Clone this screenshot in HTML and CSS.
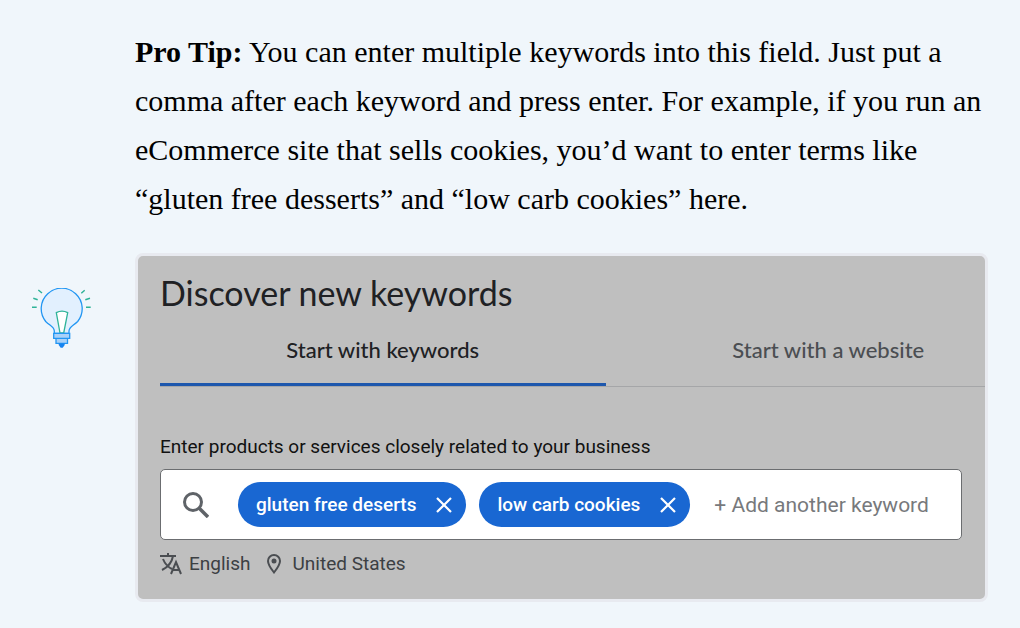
FILE: index.html
```html
<!DOCTYPE html>
<html lang="en">
<head>
	<meta charset="UTF-8">
	<meta name="viewport" content="width=device-width, initial-scale=1">
	<title>Pro Tip</title>
	<link rel="stylesheet" href="styles.css">
</head>
<body>
	<div class="tip">
		<svg class="bulb" viewBox="0 0 60 60" fill="none" stroke-width="1.300" aria-hidden="true">
			<path d="M22.300 45.300V43c0-4-4-5-8.600-9.500a20.500 20.500 0 1 1 32 0C41 38 37 39 37 43v2.300z" fill="#e2f0fe" stroke="#2196f3"/>
			<path d="M28 45 24.300 24.700q5.700-3 11.400 0L31.700 45z" fill="#fff" stroke="#2eb398"/>
			<path d="M21.700 45.300h16v5h-16zM24 50.300h11.500v5H24z" fill="#a9d1f8" stroke="#2196f3"/>
			<path d="M26.700 55.500h6v1.500l-2 2.700h-2l-2-2.700z" fill="#1683f0"/>
			<path d="m6.300 2 3.700 3M1.300 10.300l4.400 1.400M0 19.300h4.700M52.700 2.300l-3.400 3M58 10.300l-4.700 1.400M58.700 19.300H54" stroke="#2eb398" stroke-width="1.500"/>
		</svg>
		<div class="tip-body">
			<p><strong>Pro Tip:</strong> You can enter multiple keywords into this field. Just put a comma after each keyword and press enter. For example, if you run an eCommerce site that sells cookies, you’d want to enter terms like “gluten free desserts” and “low carb cookies” here.</p>
			<div class="planner">
				<h2>Discover new keywords</h2>
				<div class="tabs">
					<button class="tab active" type="button">Start with keywords</button>
					<button class="tab" type="button">Start with a website</button>
				</div>
				<form class="search">
					<label for="keyword">Enter products or services closely related to your business</label>
					<div class="field">
						<svg class="glass" viewBox="0 0 26 26" fill="none" aria-hidden="true">
							<circle cx="10" cy="10" r="8.500" stroke="#5f6368" stroke-width="3"/>
							<path d="m16 16 9 9" stroke="#5f6368" stroke-width="3.500"/>
						</svg>
						<span class="chip">gluten free deserts
							<button type="button" aria-label="Remove gluten free deserts"><svg viewBox="0 0 16 16"><path d="m1 1 14 14M15 1 1 15"/></svg></button>
						</span>
						<span class="chip">low carb cookies
							<button type="button" aria-label="Remove low carb cookies"><svg viewBox="0 0 16 16"><path d="m1 1 14 14M15 1 1 15"/></svg></button>
						</span>
						<input id="keyword" type="text" placeholder="+ Add another keyword">
					</div>
				</form>
				<div class="meta">
					<svg class="lang" viewBox="0 0 22 22" fill="none" stroke="#4b4e52" stroke-width="2" aria-hidden="true">
						<path d="M0 3h16M8 0v3M3 6c2 5 5 8 9 10M13 3C12 9 8 14 2 17"/>
						<path d="m11 21 5-12 5 12M13 17h6"/>
					</svg>
					<span>English</span>
					<svg class="pin" viewBox="0 0 16 20" fill="none" aria-hidden="true">
						<path d="M8 18.500C4 13.500 2 10.500 2 7a6 6 0 0 1 12 0c0 3.500-2 6.500-6 11.500z" stroke="#4b4e52" stroke-width="2"/>
						<circle cx="8" cy="7" r="2.500" fill="#4b4e52"/>
					</svg>
					<span>United States</span>
				</div>
			</div>
		</div>
	</div>
</body>
</html>
```
FILE: styles.css
```css
*{
	margin: 0;
	padding: 0;
	box-sizing: border-box;
}
body{
	background: #f0f6fb;
	color: #000;
}
.tip{
	display: flex;
	align-items: center;
	gap: 43px;
	padding: 27px 32px 19px;
}
.bulb{
	flex: none;
	width: 60px;
	height: 60px;
	margin-top: 7px;
}
.tip-body{
	flex: 1;
	min-width: 0;
}
.tip-body p{
	margin-bottom: 30px;
	font: 30px/49px Georgia, "Liberation Serif", serif;
}
.planner{
	padding: 15px 0 23px 22px;
	border: 3px solid #e8eaf0;
	border-radius: 8px;
	background: #bfbfbf;
	font-family: Roboto, sans-serif;
	font-size: 19px;
	color: #202124;
	overflow: hidden;
}
.planner h2{
	font: 34px/44px Lato, sans-serif;
}
.tabs{
	display: flex;
	overflow: hidden;
	border-bottom: 1px solid #a5a6a8;
}
.tab{
	flex: 0 0 54%;
	height: 71px;
	padding-top: 2px;
	border: 0;
	border-bottom: 3px solid transparent;
	background: none;
	font: 500 22px/24px Lato, sans-serif;
	color: #4b4e52;
}
.tab.active{
	border-bottom-color: #1d57ad;
	color: #202124;
}
.search{
	padding: 48px 23px 12px 0;
}
.search label{
	display: block;
	margin-bottom: 10px;
	line-height: 24px;
	color: #111;
}
.field{
	display: flex;
	align-items: center;
	height: 71px;
	padding: 0 22px;
	border: 1px solid #6b6d70;
	border-radius: 5px;
	background: #fff;
}
.glass{
	flex: none;
	width: 26px;
	height: 26px;
	margin-right: 29px;
}
.chip{
	display: flex;
	flex: none;
	align-items: center;
	gap: 20px;
	height: 45px;
	margin-right: 13px;
	padding: 0 14px 0 18px;
	border-radius: 23px;
	background: #1967d2;
	font-weight: 500;
	color: #fff;
}
.chip button{
	width: 16px;
	height: 16px;
	border: 0;
	background: none;
}
.chip svg{
	display: block;
	stroke: #fff;
	stroke-width: 2.2;
}
.field input{
	flex: 1;
	min-width: 0;
	margin-left: 11px;
	border: 0;
	outline: 0;
	background: none;
	font: 21px Roboto, sans-serif;
}
.field input::placeholder{
	color: #77797c;
}
.meta{
	display: flex;
	align-items: center;
	line-height: 24px;
	color: #3c4043;
}
.lang{
	width: 22px;
	height: 22px;
	margin-right: 7px;
}
.pin{
	width: 16px;
	height: 20px;
	margin: 0 10px 0 16px;
}
```
